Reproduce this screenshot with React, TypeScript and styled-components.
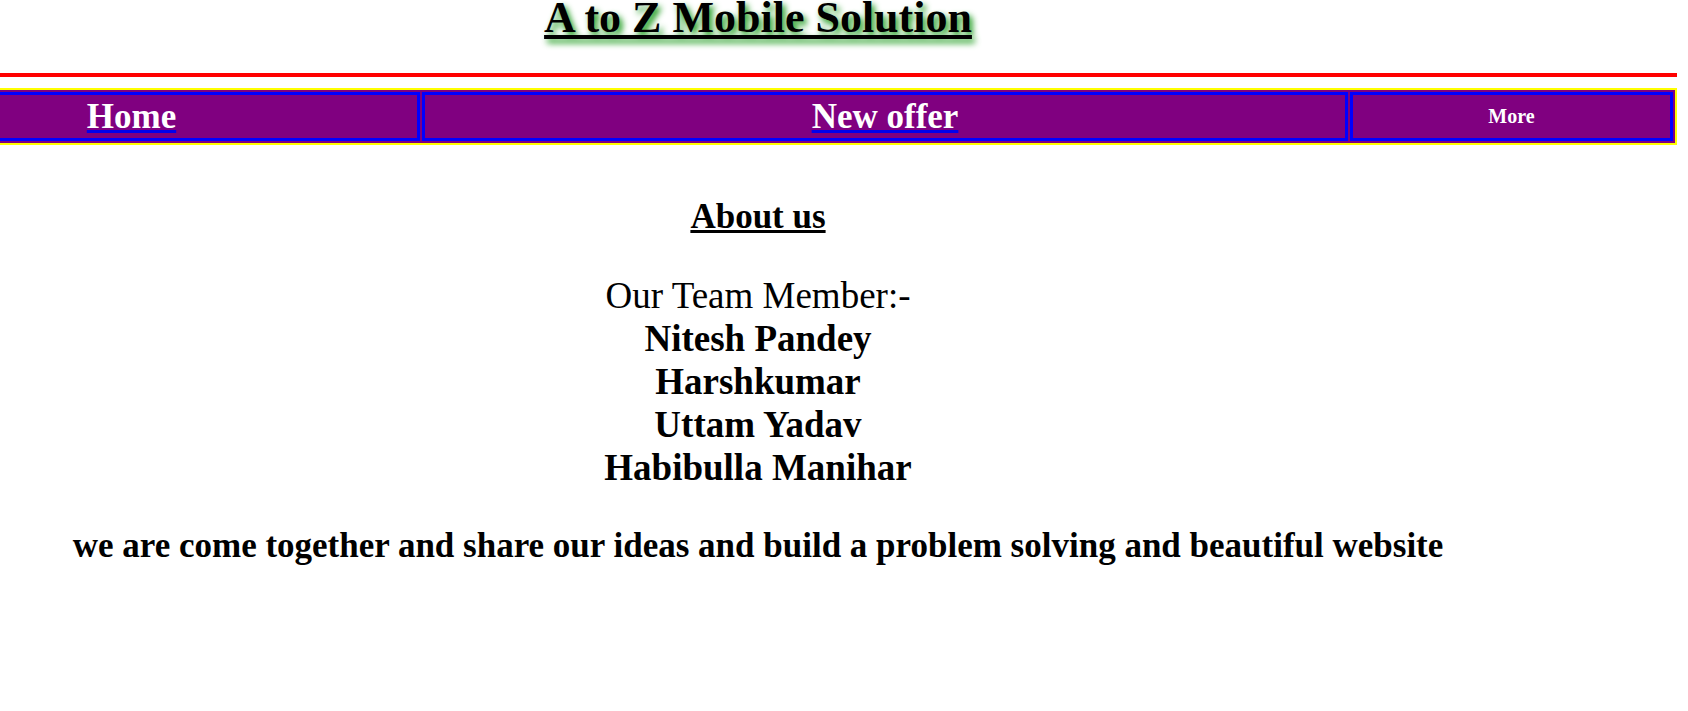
import React from "react";
import styled, { createGlobalStyle } from "styled-components";

const GlobalStyle = createGlobalStyle`
  html, body {
    margin: 0;
    padding: 0;
    background: #ffffff;
  }
  body {
    font-family: "Liberation Serif", "Times New Roman", serif;
    color: #000000;
  }
`;

// the original page is wider than the window and scrolled sideways
const Viewport = styled.div`
  width: 100%;
  overflow: hidden;
`;

const Page = styled.div`
  width: 1838px;
  margin-left: -161px;
  padding-bottom: 120px;
`;

const Title = styled.h1`
  margin: 0;
  font-size: 44px;
  line-height: 36px;
  font-weight: 700;
  text-align: center;
  text-decoration: underline;
  text-shadow: 3px 4px 6px #1a9a1a;
`;

const Rule = styled.div`
  height: 4px;
  margin-top: 37px;
  background: #ff0000;
`;

const Nav = styled.nav`
  display: grid;
  grid-template-columns: 577px 926px 1fr;
  gap: 2px;
  margin-top: 11px;
  padding: 2px;
  border: 2px solid #ffff00;
  background: #800080;
`;

const NavCell = styled.div`
  height: 43px;
  display: flex;
  align-items: center;
  justify-content: center;
  border: 3px solid #0000ff;
`;

const NavLink = styled.a<{ $size: number; $underline?: boolean }>`
  color: #ffffff;
  font-size: ${(p) => p.$size}px;
  font-weight: 700;
  cursor: pointer;
  text-decoration: ${(p) => (p.$underline ? "underline" : "none")};
  text-decoration-color: #0000ee;
  text-decoration-thickness: 3px;
`;

const About = styled.section`
  text-align: center;
`;

const AboutHeading = styled.h2`
  margin: 52px 0 0;
  font-size: 35px;
  font-weight: 700;
  text-decoration: underline;
`;

const Team = styled.div`
  margin-top: 37px;
  font-size: 37px;
`;

const TeamLine = styled.div<{ $bold?: boolean }>`
  font-weight: ${(p) => (p.$bold ? 700 : 400)};
`;

const Statement = styled.p`
  margin: 37px 0 0;
  font-size: 35px;
  font-weight: 700;
`;

const members = ["Nitesh Pandey", "Harshkumar", "Uttam Yadav", "Habibulla Manihar"];

const App: React.FC = () => {
  return (
    <Viewport>
      <GlobalStyle />
      <Page>
        <Title>A to Z Mobile Solution</Title>
        <Rule />
        <Nav>
          <NavCell>
            <NavLink $size={35} $underline>
              Home
            </NavLink>
          </NavCell>
          <NavCell>
            <NavLink $size={35} $underline>
              New offer
            </NavLink>
          </NavCell>
          <NavCell>
            <NavLink $size={20}>More</NavLink>
          </NavCell>
        </Nav>

        <About>
          <AboutHeading>About us</AboutHeading>
          <Team>
            <TeamLine>Our Team Member:-</TeamLine>
            {members.map((name) => (
              <TeamLine key={name} $bold>
                {name}
              </TeamLine>
            ))}
          </Team>
          <Statement>
            we are come together and share our ideas and build a problem solving and beautiful website
          </Statement>
        </About>
      </Page>
    </Viewport>
  );
};

export default App;
